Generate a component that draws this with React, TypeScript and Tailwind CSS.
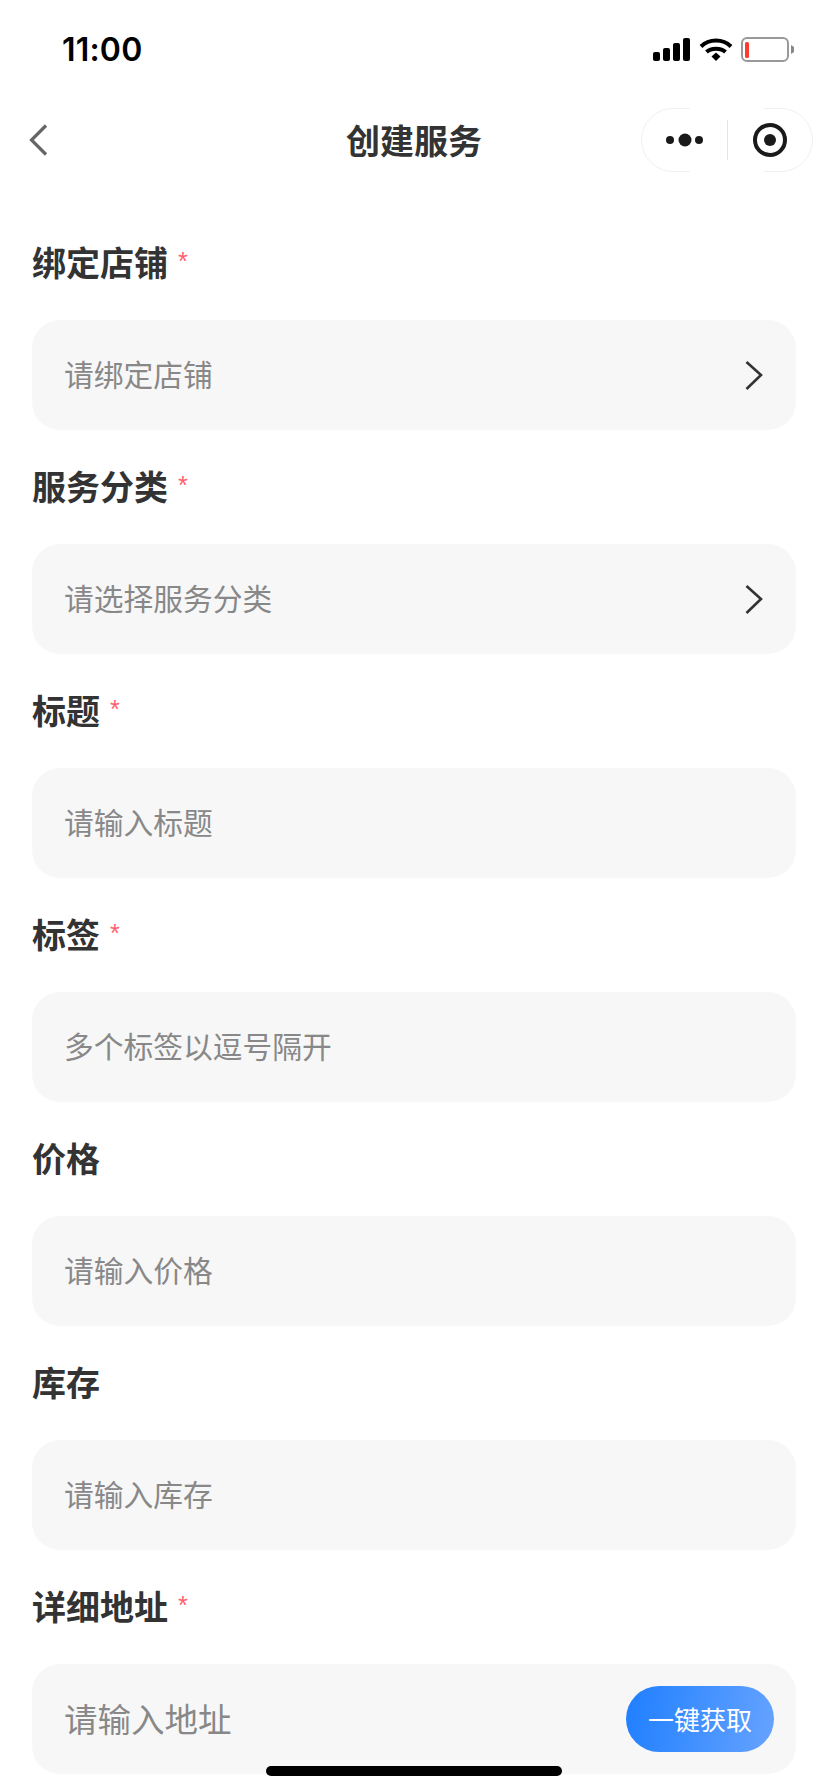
const cjk = "font-['Noto_Sans_CJK_SC','Noto_Sans',sans-serif]";

type Field = {
  label: string;
  placeholder: string;
  required?: boolean;
  arrow?: boolean;
};

const fields: Field[] = [
  { label: "绑定店铺", placeholder: "请绑定店铺", required: true, arrow: true },
  { label: "服务分类", placeholder: "请选择服务分类", required: true, arrow: true },
  { label: "标题", placeholder: "请输入标题", required: true },
  { label: "标签", placeholder: "多个标签以逗号隔开", required: true },
  { label: "价格", placeholder: "请输入价格" },
  { label: "库存", placeholder: "请输入库存" },
];

function StatusBar() {
  return (
    <div className="flex h-[88px] items-start justify-between pl-[62px] pr-[34px] pt-[37px]">
      <span className="font-['Inter',sans-serif] text-[32px] leading-[26px] font-semibold tracking-[0.2px] text-black">
        11:00
      </span>
      <svg width="141" height="26" viewBox="0 0 141 26">
        <rect x="0" y="15" width="7" height="9" rx="2" fill="#000" />
        <rect x="10" y="11" width="7" height="13" rx="2" fill="#000" />
        <rect x="20" y="6" width="7" height="18" rx="2" fill="#000" />
        <rect x="30" y="1" width="7" height="23" rx="2" fill="#000" />
        <path d="M48 9.5 C56 1.5 70 1.5 78 9.5" fill="none" stroke="#000" strokeWidth="4" />
        <path d="M53.5 15 C58 10.5 68 10.5 72.5 15" fill="none" stroke="#000" strokeWidth="4" />
        <path d="M58.5 19.5 L63 15.6 L67.5 19.5 L63 24 Z" fill="#000" />
        <rect x="89" y="1" width="46" height="23" rx="5" fill="none" stroke="#999" strokeWidth="2" />
        <rect x="92" y="5" width="4" height="16" rx="1.5" fill="#ff3b30" />
        <path d="M138 8 L141 10 V15 L138 17 Z" fill="#888" />
      </svg>
    </div>
  );
}

function Capsule() {
  return (
    <svg width="172" height="64" viewBox="0 0 172 64" className="justify-self-end">
      <path d="M49 0.5 H32 A31.5 31.5 0 0 0 32 63.5 H49" fill="none" stroke="#f0f0f0" />
      <path d="M123 0.5 H140 A31.5 31.5 0 0 1 140 63.5 H123" fill="none" stroke="#f0f0f0" />
      <line x1="86.5" y1="12" x2="86.5" y2="52" stroke="#e5e5e5" />
      <circle cx="29" cy="32" r="4" fill="#1a1a1a" />
      <circle cx="44" cy="32" r="6.5" fill="#1a1a1a" />
      <circle cx="58" cy="32" r="4" fill="#1a1a1a" />
      <circle cx="129" cy="32" r="15" fill="none" stroke="#1a1a1a" strokeWidth="4" />
      <circle cx="129" cy="32" r="6" fill="#1a1a1a" />
    </svg>
  );
}

function NavBar() {
  return (
    <div className="grid h-[104px] grid-cols-[1fr_auto_1fr] items-center px-[15px]">
      <svg width="22" height="34" viewBox="0 0 22 34" className="ml-[13px]">
        <path d="M18 2.5 L3.5 17 L18 31.5" fill="none" stroke="#666" strokeWidth="3.2" />
      </svg>
      <h1 className={`${cjk} text-[34px] leading-[48px] font-bold text-[#333]`}>创建服务</h1>
      <Capsule />
    </div>
  );
}

function Label({ text, required }: { text: string; required?: boolean }) {
  return (
    <div className="flex h-[48px] items-center pb-[4px]">
      <span className={`${cjk} text-[34px] leading-[44px] font-bold text-[#333]`}>{text}</span>
      {required && (
        <span className="ml-[10px] mb-[2px] font-['Liberation_Sans',sans-serif] text-[25px] leading-[24px] text-[#ff5f70]">
          *
        </span>
      )}
    </div>
  );
}

function FieldRow({ label, placeholder, required, arrow }: Field) {
  return (
    <div className="mb-[34px]">
      <Label text={label} required={required} />
      <div className="mt-[32px] flex h-[110px] items-center justify-between rounded-[28px] bg-[#f7f7f7] px-[32px]">
        <span className={`${cjk} mb-[4px] text-[29.75px] leading-[44px] text-[#888]`}>{placeholder}</span>
        {arrow && (
          <svg width="20" height="32" viewBox="0 0 20 32">
            <path d="M2.5 3 L17 16 L2.5 30" fill="none" stroke="#333" strokeWidth="2.6" />
          </svg>
        )}
      </div>
    </div>
  );
}

export default function App() {
  return (
    <div className="relative h-[1792px] w-[828px] overflow-hidden bg-white">
      <StatusBar />
      <NavBar />
      <div className="px-[32px] pt-[48px]">
        {fields.map((f) => (
          <FieldRow key={f.label} {...f} />
        ))}
        <div>
          <Label text="详细地址" required />
          <div className="mt-[32px] flex h-[110px] items-center justify-between rounded-[28px] bg-[#f7f7f7] pl-[32px] pr-[22px]">
            <span className={`${cjk} mb-[2px] text-[33.5px] leading-[48px] text-[#888]`}>请输入地址</span>
            <button className={`${cjk} h-[66px] w-[148px] rounded-full bg-[linear-gradient(100deg,#1f7fff,#66a3ff)] pb-[2px] text-[26px] text-white`}>
              一键获取
            </button>
          </div>
        </div>
      </div>
      {/* home indicator */}
      <div className="absolute left-[266px] top-[1766px] h-[10px] w-[296px] rounded-full bg-black" />
    </div>
  );
}
